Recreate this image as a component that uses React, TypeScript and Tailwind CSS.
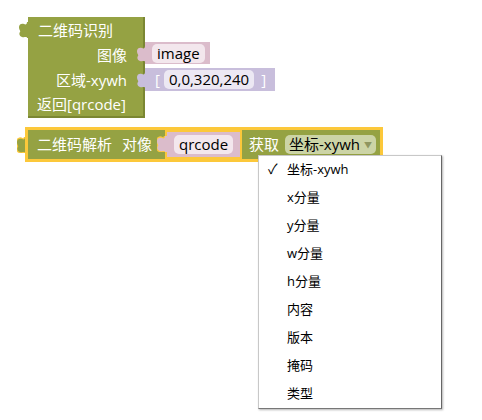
import { Fragment } from "react";

const FONT = { fontFamily: '"Open Sans", "Noto Sans CJK SC", sans-serif' };

const MENU_ITEMS = ["坐标-xywh", "x分量", "y分量", "w分量", "h分量", "内容", "版本", "掩码", "类型"];

function OutputTab({ fill, stroke }: { fill: string; stroke?: string }) {
  return (
    <svg width="10" height="16" viewBox="0 0 10 16" className="block">
      <path
        d="M10 0 V16 H8 C8 14 5 16 3 15 C0 14 0 11 1 10 C2 9 0 8 0 5 C0 2 3 1 5 2 C7 3 8 2 8 0 Z"
        fill={fill}
        stroke={stroke}
        strokeWidth={stroke ? 2.5 : 0}
        paintOrder="stroke"
      />
    </svg>
  );
}

function Field({ children, className = "" }: { children: React.ReactNode; className?: string }) {
  return (
    <span className={`flex h-[19px] items-center rounded-[5px] px-[5px] text-[15px] leading-none text-black ${className}`}>
      {children}
    </span>
  );
}

export default function App() {
  return (
    <div className="relative h-[420px] w-[482px] overflow-hidden bg-white" style={FONT}>
      {/* 二维码识别 block */}
      <div className="absolute left-[19px] top-[22px]">
        <OutputTab fill="#95a243" />
      </div>
      <div className="absolute left-[28px] top-[17px] flex h-[101px] w-[117px] flex-col border-b-2 border-r-2 border-[#7b8733] bg-[#95a243] text-[15px] leading-none text-white">
        <div className="flex h-[25px] items-center pl-[10px] pt-[2px]">二维码识别</div>
        <div className="flex h-[25px] items-center justify-end pr-[16px] pt-[1px]">图像</div>
        <div className="flex h-[25px] items-center justify-end pr-[16px] pt-[1px]">区域-xywh</div>
        <div className="flex h-[24px] items-center pl-[9px]">返回[qrcode]</div>
      </div>

      {/* image */}
      <div className="absolute left-[137px] top-[46px]">
        <OutputTab fill="#dbbccb" />
      </div>
      <div className="absolute left-[145px] top-[42px] flex h-[22px] w-[65px] items-center bg-[#dbbccb] pl-[7px]">
        <Field className="bg-[#f3e7ed]">image</Field>
      </div>

      {/* array */}
      <div className="absolute left-[137px] top-[72px]">
        <OutputTab fill="#c8bedc" />
      </div>
      <div className="absolute left-[145px] top-[68px] flex h-[23px] w-[130px] items-center gap-[4px] bg-[#c8bedc] pl-[10px] text-[15px] text-white">
        <span>[</span>
        <Field className="bg-[#ece8f3]">0,0,320,240</Field>
        <span className="pl-[3px]">]</span>
      </div>

      {/* 二维码解析 block (selected) */}
      <div className="absolute left-[17px] top-[137px]">
        <OutputTab fill="#95a243" stroke="#fcc83a" />
      </div>
      <div className="absolute left-[25px] top-[127px] flex h-[35px] w-[358px] items-center border-[3px] border-[#fcc83a] bg-[#95a243] text-[15px] leading-none text-white">
        <span className="pl-[9px]">二维码解析</span>
        <span className="pl-[10px]">对像</span>
        <span className="relative ml-[13px] flex h-[29px] w-[77px] items-center">
          <span className="absolute -left-[8px] top-[6px]">
            <OutputTab fill="#dbbccb" stroke="#fcc83a" />
          </span>
          <span className="flex h-[29px] w-[77px] items-center border-[2px] border-[#fcc83a] bg-[#dbbccb] pl-[7px]">
            <Field className="bg-[#f3e7ed]">qrcode</Field>
          </span>
        </span>
        <span className="pl-[7px]">获取</span>
        <span className="ml-[6px] flex h-[19px] items-center rounded-[5px] bg-[#ccd4a6] pl-[4px] pr-[4px] text-black">
          坐标-xywh
          <span className="pl-[4px] text-[8px] text-[#8f9660]">▼</span>
        </span>
      </div>

      {/* dropdown menu */}
      <div className="absolute left-[258px] top-[155px] w-[184px] border border-[#c8c8c8] border-b-[#777] border-r-[#666] bg-white shadow-[1px_1px_2px_rgba(0,0,0,0.3)]">
        {MENU_ITEMS.map((item, i) => (
          <Fragment key={item}>
            <div className="flex h-[28px] items-center pb-[2px] text-[13px] leading-none text-black">
              <span className="w-[28px] pl-[9px] text-[14px]">{i === 0 ? "✓" : ""}</span>
              <span>{item}</span>
            </div>
          </Fragment>
        ))}
      </div>
    </div>
  );
}
